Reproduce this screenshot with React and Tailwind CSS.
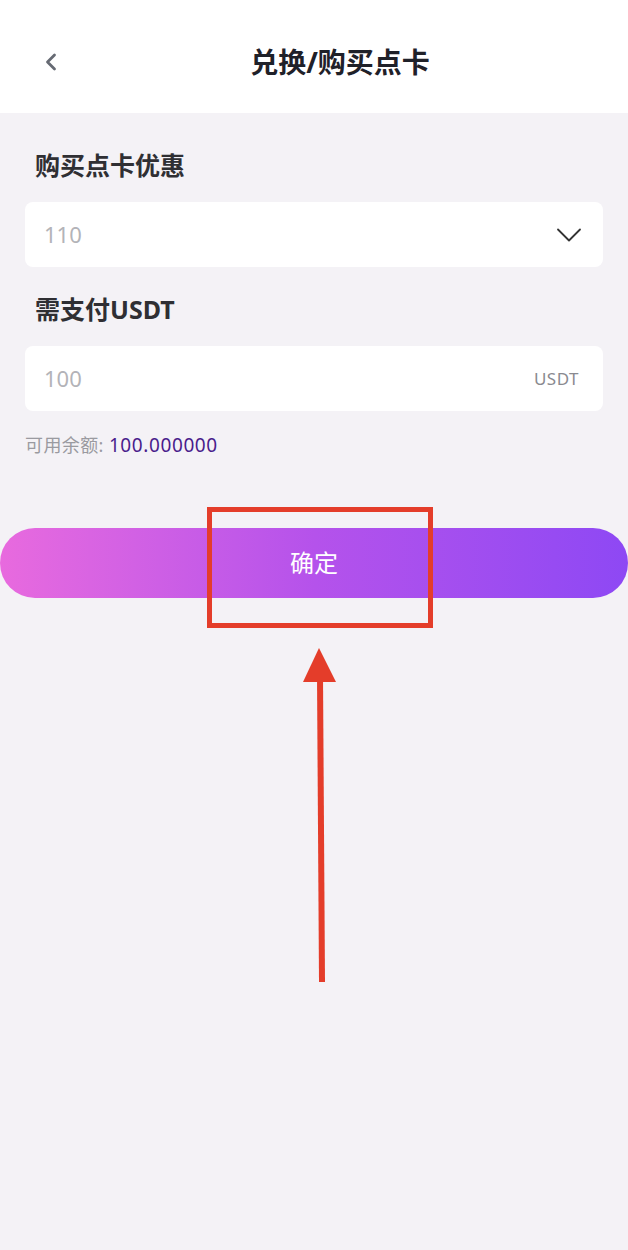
import { ChevronLeft, ChevronDown } from 'lucide-react';

const font = { fontFamily: '"Noto Sans", "Noto Sans CJK SC", sans-serif' };

function Field({ label, value, suffix, select }) {
  return (
    <div>
      <p className="px-[10px] text-[25px] font-bold leading-[32px] text-[#2f2f33]">{label}</p>
      <div className={`mt-[21px] flex h-[65px] items-center justify-between rounded-[8px] bg-white pl-[19px] ${select ? 'pr-[12px]' : 'pr-[24px]'}`}>
        <span className="text-[22px] text-[#b3b3b8]">{value}</span>
        {select && <ChevronDown className="h-[44px] w-[44px] text-[#333]" strokeWidth={1} />}
        {suffix && <span className="text-[17px] tracking-[0.5px] text-[#8a8a90]">{suffix}</span>}
      </div>
    </div>
  );
}

export default function App() {
  return (
    <div className="relative min-h-[1250px] bg-[#f4f2f6]" style={font}>
      {/* header */}
      <div className="relative flex h-[113px] items-center justify-center bg-white pt-[10px]">
        <button className="absolute left-[37px] top-[48px] text-[#666a73]">
          <ChevronLeft className="h-[28px] w-[28px]" strokeWidth={2.4} />
        </button>
        <h1 className="ml-[52px] text-[28px] font-bold text-[#1f2129]">兑换/购买点卡</h1>
      </div>

      <div className="px-[25px] pt-[36px]">
        <Field label="购买点卡优惠" value="110" select />
        <div className="mt-[26px]">
          <Field label="需支付USDT" value="100" suffix="USDT" />
        </div>
        <p className="mt-[20px] text-[18px] tracking-[0.4px] text-[#9a9aa0]">
          可用余额: <span className="text-[19px] tracking-[0.6px] text-[#4a1d8c]">100.000000</span>
        </p>
      </div>

      <div className="mt-[68px]">
        <button className="flex h-[70px] w-full items-center justify-center rounded-full bg-gradient-to-r from-[#e86ade] via-[#b552eb] to-[#8e48f4] text-[24px] text-white">
          确定
        </button>
      </div>

      {/* annotation overlay */}
      <div className="pointer-events-none absolute left-[207px] top-[507px] h-[121px] w-[226px] border-[5px] border-[#e43d2a]" />
      <svg className="pointer-events-none absolute left-0 top-0" width="628" height="1250">
        <line x1="322" y1="982" x2="320" y2="676" stroke="#e43d2a" strokeWidth="6" />
        <polygon points="319,648 303,682 336,682" fill="#e43d2a" />
      </svg>
    </div>
  );
}
